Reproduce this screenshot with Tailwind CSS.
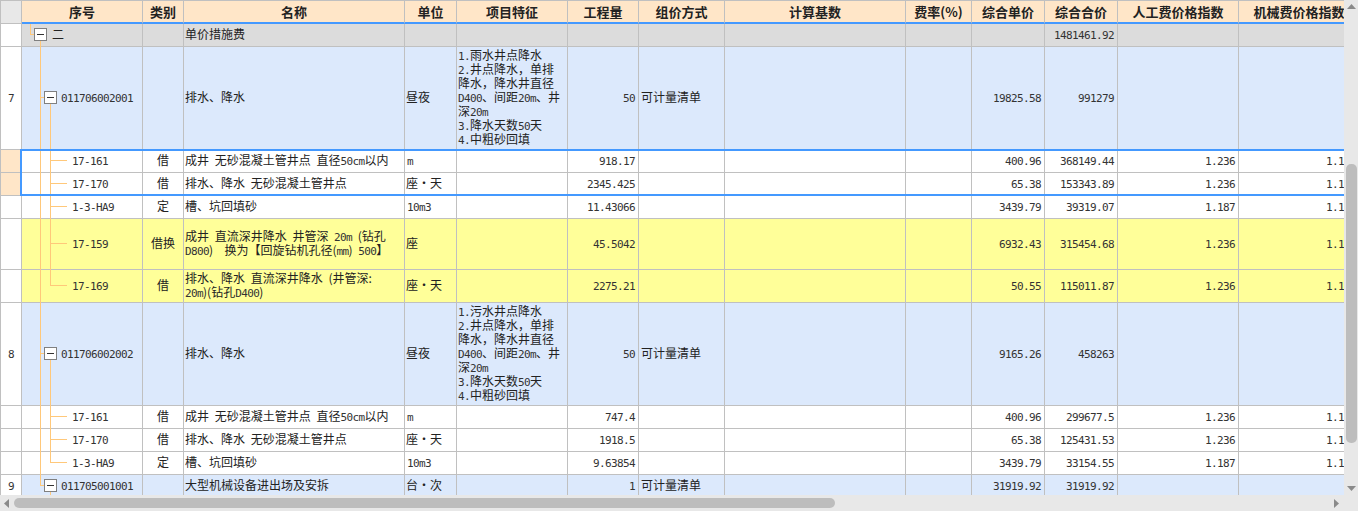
<!DOCTYPE html>
<html lang="zh-CN">
<head>
<meta charset="utf-8">
<title>分部分项工程量清单</title>
<script src="https://cdn.jsdelivr.net/npm/@tailwindcss/browser@4"></script>
</head>
<body class="bg-white">
<div class="flex h-[511px] w-[1358px] flex-col overflow-hidden bg-[#e8e8e8]">
	<div class="flex h-[495px]">
		<!-- grid -->
		<div class="relative h-[495px] w-[1344px] overflow-hidden bg-white">
			<table class="w-[1360px] table-fixed border-separate border-spacing-0 font-['Noto_Sans_CJK_SC',sans-serif] text-[12px] leading-[14px] text-[#222] [word-spacing:3px] [&_td]:border-r [&_td]:border-b [&_td]:border-[#c0c0c0] [&_td]:pb-[3px] [&_th]:border-r [&_th]:border-t [&_th]:border-[#c0c0c0] [&_th]:text-[13px] [&_th]:font-bold [&_span]:font-['DejaVu_Sans_Mono',monospace] [&_span]:text-[11px] [&_span]:leading-none [&_span]:tracking-[-0.62px] [&_span]:text-[#333]">
				<colgroup>
					<col class="w-[22px]"><col class="w-[121px]"><col class="w-[41px]"><col class="w-[221px]"><col class="w-[52px]"><col class="w-[111px]"><col class="w-[71px]"><col class="w-[86px]"><col class="w-[181px]"><col class="w-[66px]"><col class="w-[73px]"><col class="w-[73px]"><col class="w-[121px]"><col class="w-[121px]">
				</colgroup>
				<thead>
					<tr class="h-[24px] bg-[#ffe6c8] [&_th]:border-b-2 [&_th]:border-b-[#4499ff]">
						<th class="border-l bg-[#e8e8e8] !border-b !border-b-[#c0c0c0]"></th>
						<th>序号</th><th>类别</th><th>名称</th><th>单位</th><th>项目特征</th><th>工程量</th><th>组价方式</th><th>计算基数</th><th>费率(%)</th><th>综合单价</th><th>综合合价</th><th>人工费价格指数</th><th>机械费价格指数</th>
					</tr>
				</thead>
				<tbody>
					<tr class="h-[23px] bg-[#dcdcdc]">
						<td class="border-l bg-white"></td>
						<td class="pl-[30px]">二</td><td></td><td class="pl-[1px]">单价措施费</td><td></td><td></td><td></td><td></td><td></td><td></td><td></td>
						<td class="pr-[3px] text-right"><span>1481461.92</span></td><td></td><td></td>
					</tr>
					<tr class="h-[103px] bg-[#dce9fc]">
						<td class="border-l bg-white text-center"><span>7</span></td>
						<td class="pl-[39px]"><span>011706002001</span></td><td></td><td class="pl-[1px]">排水、降水</td><td class="pl-[1px]">昼夜</td>
						<td class="pl-[1px]"><span>1.</span>雨水井点降水<br><span>2.</span>井点降水，单排<br>降水，降水井直径<br><span>D400</span>、间距<span>20m</span>、井<br>深<span>20m</span><br><span>3.</span>降水天数<span>50</span>天<br><span>4.</span>中粗砂回填</td>
						<td class="pr-[3px] text-right"><span>50</span></td><td class="pl-[2px]">可计量清单</td><td></td><td></td>
						<td class="pr-[3px] text-right"><span>19825.58</span></td><td class="pr-[3px] text-right"><span>991279</span></td><td></td><td></td>
					</tr>
					<tr class="h-[23px]">
						<td class="border-l bg-[#ffe6c8]"></td>
						<td class="pl-[50px]"><span>17-161</span></td><td class="text-center">借</td><td class="pl-[1px]">成井 无砂混凝土管井点 直径<span>50cm</span>以内</td><td class="pl-[2px]"><span>m</span></td><td></td>
						<td class="pr-[3px] text-right"><span>918.17</span></td><td></td><td></td><td></td>
						<td class="pr-[3px] text-right"><span>400.96</span></td><td class="pr-[3px] text-right"><span>368149.44</span></td><td class="pr-[3px] text-right"><span>1.236</span></td><td class="pr-[3px] text-right"><span>1.187</span></td>
					</tr>
					<tr class="h-[23px]">
						<td class="border-l bg-[#ffe6c8]"></td>
						<td class="pl-[50px]"><span>17-170</span></td><td class="text-center">借</td><td class="pl-[1px]">排水、降水 无砂混凝土管井点</td><td class="pl-[1px]">座・天</td><td></td>
						<td class="pr-[3px] text-right"><span>2345.425</span></td><td></td><td></td><td></td>
						<td class="pr-[3px] text-right"><span>65.38</span></td><td class="pr-[3px] text-right"><span>153343.89</span></td><td class="pr-[3px] text-right"><span>1.236</span></td><td class="pr-[3px] text-right"><span>1.187</span></td>
					</tr>
					<tr class="h-[23px]">
						<td class="border-l"></td>
						<td class="pl-[50px]"><span>1-3-HA9</span></td><td class="text-center">定</td><td class="pl-[1px]">槽、坑回填砂</td><td class="pl-[2px]"><span>10m3</span></td><td></td>
						<td class="pr-[3px] text-right"><span>11.43066</span></td><td></td><td></td><td></td>
						<td class="pr-[3px] text-right"><span>3439.79</span></td><td class="pr-[3px] text-right"><span>39319.07</span></td><td class="pr-[3px] text-right"><span>1.187</span></td><td class="pr-[3px] text-right"><span>1.187</span></td>
					</tr>
					<tr class="h-[51px] bg-[#ffff99]">
						<td class="border-l bg-white"></td>
						<td class="pl-[50px]"><span>17-159</span></td><td class="text-center">借换</td><td class="pl-[1px]">成井 直流深井降水 井管深 <span>20m</span> (钻孔<br><span>D800</span>) &nbsp;换为【回旋钻机孔径(<span>mm</span>) <span>500</span>】</td><td class="pl-[1px]">座</td><td></td>
						<td class="pr-[3px] text-right"><span>45.5042</span></td><td></td><td></td><td></td>
						<td class="pr-[3px] text-right"><span>6932.43</span></td><td class="pr-[3px] text-right"><span>315454.68</span></td><td class="pr-[3px] text-right"><span>1.236</span></td><td class="pr-[3px] text-right"><span>1.187</span></td>
					</tr>
					<tr class="h-[33px] bg-[#ffff99]">
						<td class="border-l bg-white"></td>
						<td class="pl-[50px]"><span>17-169</span></td><td class="text-center">借</td><td class="pl-[1px]">排水、降水 直流深井降水 (井管深:<br><span>20m</span>)(钻孔<span>D400</span>)</td><td class="pl-[1px]">座・天</td><td></td>
						<td class="pr-[3px] text-right"><span>2275.21</span></td><td></td><td></td><td></td>
						<td class="pr-[3px] text-right"><span>50.55</span></td><td class="pr-[3px] text-right"><span>115011.87</span></td><td class="pr-[3px] text-right"><span>1.236</span></td><td class="pr-[3px] text-right"><span>1.187</span></td>
					</tr>
					<tr class="h-[103px] bg-[#dce9fc]">
						<td class="border-l bg-white text-center"><span>8</span></td>
						<td class="pl-[39px]"><span>011706002002</span></td><td></td><td class="pl-[1px]">排水、降水</td><td class="pl-[1px]">昼夜</td>
						<td class="pl-[1px]"><span>1.</span>污水井点降水<br><span>2.</span>井点降水，单排<br>降水，降水井直径<br><span>D400</span>、间距<span>20m</span>、井<br>深<span>20m</span><br><span>3.</span>降水天数<span>50</span>天<br><span>4.</span>中粗砂回填</td>
						<td class="pr-[3px] text-right"><span>50</span></td><td class="pl-[2px]">可计量清单</td><td></td><td></td>
						<td class="pr-[3px] text-right"><span>9165.26</span></td><td class="pr-[3px] text-right"><span>458263</span></td><td></td><td></td>
					</tr>
					<tr class="h-[23px]">
						<td class="border-l"></td>
						<td class="pl-[50px]"><span>17-161</span></td><td class="text-center">借</td><td class="pl-[1px]">成井 无砂混凝土管井点 直径<span>50cm</span>以内</td><td class="pl-[2px]"><span>m</span></td><td></td>
						<td class="pr-[3px] text-right"><span>747.4</span></td><td></td><td></td><td></td>
						<td class="pr-[3px] text-right"><span>400.96</span></td><td class="pr-[3px] text-right"><span>299677.5</span></td><td class="pr-[3px] text-right"><span>1.236</span></td><td class="pr-[3px] text-right"><span>1.187</span></td>
					</tr>
					<tr class="h-[23px]">
						<td class="border-l"></td>
						<td class="pl-[50px]"><span>17-170</span></td><td class="text-center">借</td><td class="pl-[1px]">排水、降水 无砂混凝土管井点</td><td class="pl-[1px]">座・天</td><td></td>
						<td class="pr-[3px] text-right"><span>1918.5</span></td><td></td><td></td><td></td>
						<td class="pr-[3px] text-right"><span>65.38</span></td><td class="pr-[3px] text-right"><span>125431.53</span></td><td class="pr-[3px] text-right"><span>1.236</span></td><td class="pr-[3px] text-right"><span>1.187</span></td>
					</tr>
					<tr class="h-[23px]">
						<td class="border-l"></td>
						<td class="pl-[50px]"><span>1-3-HA9</span></td><td class="text-center">定</td><td class="pl-[1px]">槽、坑回填砂</td><td class="pl-[2px]"><span>10m3</span></td><td></td>
						<td class="pr-[3px] text-right"><span>9.63854</span></td><td></td><td></td><td></td>
						<td class="pr-[3px] text-right"><span>3439.79</span></td><td class="pr-[3px] text-right"><span>33154.55</span></td><td class="pr-[3px] text-right"><span>1.187</span></td><td class="pr-[3px] text-right"><span>1.187</span></td>
					</tr>
					<tr class="h-[23px] bg-[#dce9fc]">
						<td class="border-l bg-white text-center"><span>9</span></td>
						<td class="pl-[39px]"><span>011705001001</span></td><td></td><td class="pl-[1px]">大型机械设备进出场及安拆</td><td class="pl-[1px]">台・次</td><td></td>
						<td class="pr-[3px] text-right"><span>1</span></td><td class="pl-[2px]">可计量清单</td><td></td><td></td>
						<td class="pr-[3px] text-right"><span>31919.92</span></td><td class="pr-[3px] text-right"><span>31919.92</span></td><td></td><td></td>
					</tr>
				</tbody>
			</table>

			<!-- tree lines over the first column -->
			<svg class="pointer-events-none absolute left-0 top-0" width="140" height="495" shape-rendering="crispEdges">
				<path fill="none" stroke="#ffc87a" d="M30.5 24V34.5H34M40.5 41V485.5H44M40.5 97.5H44M40.5 353.5H44M50.5 104V285.5H67M50.5 160.5H67M50.5 183.5H67M50.5 206.5H67M50.5 243.5H67M50.5 360V462.5H67M50.5 416.5H67M50.5 439.5H67M50.5 492V495"/>
				<g fill="#fff" stroke="#808080">
					<rect x="34.5" y="28.5" width="12" height="12"/>
					<rect x="44.5" y="91.5" width="12" height="12"/>
					<rect x="44.5" y="347.5" width="12" height="12"/>
					<rect x="44.5" y="479.5" width="12" height="12"/>
				</g>
				<path fill="none" stroke="#333" d="M37 34.5H44M47 97.5H54M47 353.5H54M47 485.5H54"/>
			</svg>

			<!-- selected rows -->
			<div class="pointer-events-none absolute left-[20px] top-[149px] h-[47px] w-[1400px] border-2 border-[#4499ff]"></div>
		</div>

		<!-- vertical scrollbar -->
		<div class="flex h-[495px] w-[14px] flex-col items-center">
			<svg class="mt-[4px]" width="9" height="6"><path fill="#8a8a8a" d="M4.5 0L9 5H0z"/></svg>
			<div class="ml-[1px] mt-[154px] h-[279px] w-[11px] rounded-[5px] bg-[#bdbdbd]"></div>
			<svg class="mt-[43px]" width="9" height="6"><path fill="#8a8a8a" d="M0 0H9L4.5 5z"/></svg>
		</div>
	</div>

	<!-- horizontal scrollbar -->
	<div class="flex h-[16px] items-center">
		<svg class="ml-[4px]" width="6" height="9"><path fill="#8a8a8a" d="M5 0V9L0 4.5z"/></svg>
		<div class="ml-[4px] h-[10px] w-[821px] rounded-[5px] bg-[#bdbdbd]"></div>
		<svg class="ml-[499px]" width="6" height="9"><path fill="#8a8a8a" d="M0 0V9L5 4.5z"/></svg>
	</div>
</div>
</body>
</html>
